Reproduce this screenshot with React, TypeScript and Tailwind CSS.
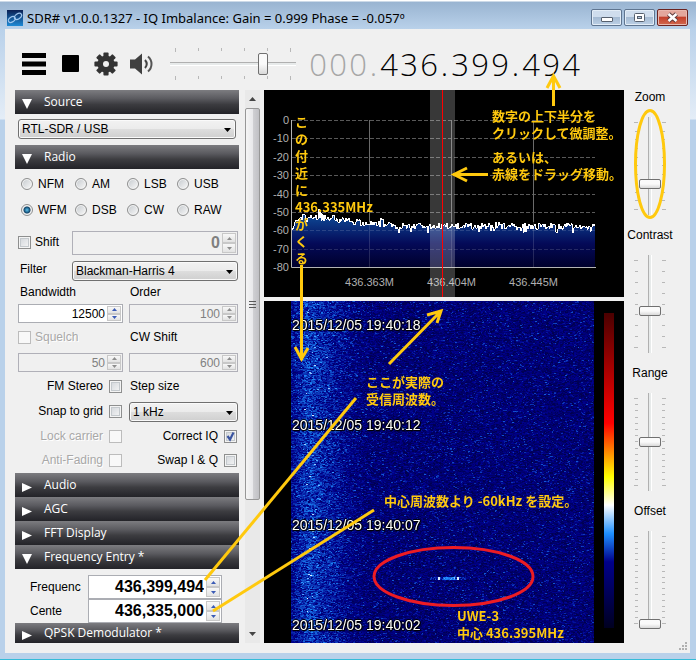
import React, { useEffect, useId, useMemo, useRef, useState } from 'react';

// small seeded generator so the noise is the same on every render
const createRandom = (seed: number) => () => {
    seed = (seed * 1664525 + 1013904223) >>> 0;
    return seed / 4294967296;
};

const PALETTE: [number, number[]][] = [
    [0, [0, 0, 40]],
    [0.35, [0, 0, 139]],
    [0.8, [30, 144, 255]],
    [1, [255, 255, 255]]
];

const levelToColor = (level: number) => {
    const v = Math.min(1, Math.max(0, level));
    const next = Math.max(1, PALETTE.findIndex(([stop]) => stop >= v));
    const [s0, c0] = PALETTE[next - 1];
    const [s1, c1] = PALETTE[next];
    return c0.map((c, i) => c + ((c1[i] - c) * (v - s0)) / (s1 - s0));
};

const WATERFALL_W = 303;
const WATERFALL_H = 342;

const TitleBar: React.FC = () => (
    <header className="h-[29px] flex items-center pl-[7px] pr-2 pt-[6px]">
        <svg width="16" height="16" viewBox="0 0 16 16" className="shrink-0">
            <defs>
                <linearGradient id="logo" x1="0" y1="0" x2="0" y2="1">
                    <stop offset="0" stopColor="#0b1f52" />
                    <stop offset="1" stopColor="#1d8ad6" />
                </linearGradient>
            </defs>
            <rect width="16" height="16" fill="url(#logo)" />
            <ellipse cx="4.8" cy="9.5" rx="3.8" ry="2.5" transform="rotate(-35 4.8 9.5)" fill="none" stroke="#9fc6ee" strokeWidth="1.2" />
            <ellipse cx="11" cy="6.4" rx="4" ry="2.5" transform="rotate(-35 11 6.4)" fill="none" stroke="#9fc6ee" strokeWidth="1.2" />
        </svg>
        <h1 className="flex-1 ml-1 font-['Noto_Sans'] text-[13px] leading-4 text-black whitespace-nowrap overflow-hidden">
            SDR# v1.0.0.1327 - IQ Imbalance: Gain = 0.999 Phase = -0.057º
        </h1>
        <div className="flex gap-0.5">
            <button aria-label="Minimize" className="w-[31px] h-[17px] rounded-[2px] border border-[#5f7590] bg-[linear-gradient(#cfdded_45%,#a5bbd3_50%,#bcd0e6)] shadow-[inset_0_0_0_1px_#e3edf7] flex justify-center items-end pb-[3px]">
                <span className="w-3 h-[5px] bg-white border border-[#56606e] rounded-[1px]"></span>
            </button>
            <button aria-label="Maximize" className="w-[31px] h-[17px] rounded-[2px] border border-[#5f7590] bg-[linear-gradient(#cfdded_45%,#a5bbd3_50%,#bcd0e6)] shadow-[inset_0_0_0_1px_#e3edf7] flex justify-center items-center">
                <svg width="11" height="9" viewBox="0 0 11 9">
                    <rect x="0.5" y="0.5" width="10" height="8" rx="1" fill="#fff" stroke="#56606e" />
                    <rect x="3.5" y="3.5" width="4" height="2" fill="#b5c8dd" stroke="#56606e" />
                </svg>
            </button>
            <button aria-label="Close" className="w-[31px] h-[17px] rounded-[2px] border border-[#6b2320] bg-[linear-gradient(#e3a79c_40%,#c4412c_50%,#d2694f)] shadow-[inset_0_0_0_1px_#e9b8ae] flex justify-center items-center">
                <svg width="13" height="11" viewBox="0 0 13 11">
                    <path d="M2.500 2l8 7M10.500 2l-8 7" stroke="#5c3a3c" strokeWidth="4.500" />
                    <path d="M2.500 2l8 7M10.500 2l-8 7" stroke="#fff" strokeWidth="2.600" />
                </svg>
            </button>
        </div>
    </header>
);

const Frequency: React.FC = () => (
    <div className="flex ml-3 font-['Open_Sans'] font-light text-[31px] leading-9" aria-label="Frequency">
        {'000.436.399.494'.split('').map((ch, i) => (
            <span key={i} className={`${ch === '.' ? 'w-[11px]' : 'w-5'} text-center ${i < 4 ? 'text-[#a6a6a6]' : 'text-black'}`}>{ch}</span>
        ))}
    </div>
);

const Toolbar: React.FC = () => {
    const [volume, setVolume] = useState(76);

    return (
        <div className="h-[61px] pt-2 pl-[11px] flex items-center">
            <button aria-label="Menu" className="w-9 flex justify-center">
                <svg width="24" height="22" viewBox="0 0 24 22">
                    <path d="M0 2.5h24M0 11h24M0 19.5h24" stroke="#000" strokeWidth="5" />
                </svg>
            </button>
            <button aria-label="Stop" className="w-9 flex justify-center">
                <span className="size-[17px] bg-black rounded-[1px]"></span>
            </button>
            <button aria-label="Settings" className="w-9 flex justify-center">
                <svg width="24" height="24" viewBox="-12 -12 24 24">
                    {[0, 45, 90, 135].map(angle => (
                        <rect key={angle} x="-2.6" y="-11.6" width="5.2" height="23.2" rx="1" fill="#333" transform={`rotate(${angle})`} />
                    ))}
                    <circle r="8.6" fill="#333" />
                    <circle r="3" fill="#f0f0f0" />
                </svg>
            </button>
            <button aria-label="Mute" className="w-9 flex justify-center">
                <svg width="24" height="22" viewBox="0 0 24 22" fill="none">
                    <path d="M0 6.500h5L12 0.500v21L5 15.500H0z" fill="#404040" />
                    <path d="M15 7q3.500 4 0 8" stroke="#444" strokeWidth="2" />
                    <path d="M18 3.500q3.500 3 3.500 7.500t-3.500 7.500" stroke="#555" strokeWidth="2" />
                </svg>
            </button>
            <div className="w-[126px] ml-[10px] flex flex-col">
                <div className="flex justify-between px-[5px]">
                    {[0, 1, 2, 3, 4, 5].map(i => <span key={i} className="w-px h-[3px] first:h-1 last:h-1 bg-[#b8b8b8]"></span>)}
                </div>
                <input
                    type="range"
                    aria-label="Volume"
                    value={volume}
                    onChange={(e) => setVolume(+e.target.value)}
                    className="appearance-none w-full h-6 bg-[linear-gradient(transparent_10px,#b0b0b0_10px,#b0b0b0_11px,#e7eaea_11px,#e7eaea_13px,#fff_13px,#fff_14px,transparent_14px)] [&::-webkit-slider-thumb]:appearance-none [&::-webkit-slider-thumb]:w-[10px] [&::-webkit-slider-thumb]:h-[22px] [&::-webkit-slider-thumb]:border [&::-webkit-slider-thumb]:border-[#707070] [&::-webkit-slider-thumb]:rounded-[2px] [&::-webkit-slider-thumb]:bg-[linear-gradient(#fafafa_50%,#d9d9d9)]"
                />
                <div className="flex justify-between px-[5px]">
                    {[0, 1, 2, 3, 4, 5].map(i => <span key={i} className="w-px h-[3px] first:h-1 last:h-1 bg-[#b8b8b8]"></span>)}
                </div>
            </div>
            <Frequency />
        </div>
    );
};

const PanelHeader: React.FC<{ title: string; open?: boolean; short?: boolean }> = ({ title, open, short }) => (
    <button className={`w-full ${short ? 'h-5' : 'h-6'} block bg-[linear-gradient(#7c7c80,#5b5b60_35%,#3c3c40_60%,#232328)] text-left overflow-hidden`}>
        <span className="flex h-5 items-center pl-[7px] font-['Open_Sans'] text-xs leading-4 text-white">
            <svg width="10" height="11" viewBox="0 0 10 11" className="mr-3 mt-[5px]">
                <path d={open ? 'M0 0h10L5 10z' : 'M0 1l10 4.500L0 10z'} fill="#fff" />
            </svg>
            {title}
        </span>
    </button>
);

const Combo: React.FC<{ id?: string; label?: string; options: string[] }> = ({ id, label, options }) => (
    <div className="relative w-full">
        <select id={id} aria-label={label} className="appearance-none w-full h-5 px-[3px] text-xs leading-4 text-black rounded-[3px] border border-[#707070] bg-[linear-gradient(#f2f2f2,#ebebeb_50%,#dddddd_52%,#cfcfcf)] shadow-[inset_0_0_0_1px_#fafafa]">
            {options.map(o => <option key={o}>{o}</option>)}
        </select>
        <svg width="7" height="4" viewBox="0 0 7 4" className="absolute right-[5px] top-[9px] pointer-events-none">
            <path d="M0 0h7L3.500 4z" fill="#000" />
        </svg>
    </div>
);

interface SpinBoxProps {
    id?: string;
    label?: string;
    value: string;
    disabled?: boolean;
    big?: boolean;
}

const SpinBox: React.FC<SpinBoxProps> = ({ id, label, value, disabled, big }) => {
    const [text, setText] = useState(value);
    const arrow = disabled ? '#8d8d8d' : '#3b5bb5';

    return (
        <div className={`w-full min-w-0 ${big ? 'h-6' : 'h-[19px]'} flex border ${disabled ? 'border-[#b0b0b8] bg-[#f0f0f0]' : 'border-[#abadb3] bg-white'}`}>
            <input
                id={id}
                aria-label={label}
                type="text"
                value={text}
                disabled={disabled}
                onChange={(e) => setText(e.target.value)}
                className={`w-0 min-w-0 flex-1 text-right bg-transparent outline-none pr-0.5 ${big ? 'text-base font-bold' : 'text-xs'} ${disabled ? 'text-[#808080]' : 'text-black'}`}
            />
            <div className="w-[14px] mr-px my-px flex flex-col">
                {['M0 3h5L2.500 0z', 'M0 0h5L2.500 3z'].map(d => (
                    <button key={d} disabled={disabled} aria-label="Step" className="flex-1 min-h-0 flex items-center justify-center border border-[#c8c8c8] bg-[linear-gradient(#f8f8f8,#e2e2e2)]">
                        <svg width="5" height="3" viewBox="0 0 5 3"><path d={d} fill={arrow} /></svg>
                    </button>
                ))}
            </div>
        </div>
    );
};

interface CheckProps {
    label: string;
    disabled?: boolean;
    defaultChecked?: boolean;
    boxFirst?: boolean;
}

const Check: React.FC<CheckProps> = ({ label, disabled, defaultChecked, boxFirst }) => (
    <label className={`flex items-center h-4 ${boxFirst ? 'flex-row-reverse justify-end gap-1' : 'justify-end gap-[6px] pr-px'} ${disabled ? 'text-[#a8a8a8] [text-shadow:1px_1px_0_#fff]' : 'text-black'}`}>
        {label}
        <span className="relative size-[13px]">
            <input
                type="checkbox"
                disabled={disabled}
                defaultChecked={defaultChecked}
                className="peer appearance-none block size-[13px] border border-[#8e8f8f] shadow-[inset_0_0_0_1px_#f4f4f4,inset_0_0_0_2px_#c4c9cd] bg-[linear-gradient(135deg,#cfd3d8,#f8f8f8)] disabled:border-[#bcbcbc] disabled:shadow-none disabled:bg-none disabled:bg-[#f8f8f8]"
            />
            <svg viewBox="0 0 13 13" className="absolute inset-0 size-[13px] hidden peer-checked:block pointer-events-none" fill="none">
                <path d="M3.500 6l2.500 3.500L9.500 2.500" stroke="#3a54a0" strokeWidth="2.200" />
            </svg>
        </span>
    </label>
);

const MODES = ['NFM', 'AM', 'LSB', 'USB', 'WFM', 'DSB', 'CW', 'RAW'];

const Sidebar: React.FC = () => {
    const [mode, setMode] = useState('WFM');
    const id = useId();

    return (
        <aside className="w-56 shrink-0 text-xs leading-4 text-black">
            <PanelHeader title="Source" open />
            <div className="pt-[5px] pb-[6px] px-[3px]">
                <Combo label="Source" options={['RTL-SDR / USB']} />
            </div>

            <PanelHeader title="Radio" open />
            <div className="pt-0.5 pb-[5px] pl-[3px] pr-px">
                <div className="grid grid-cols-[54px_52px_50px_1fr] pl-[3px]">
                    {MODES.map(m => (
                        <label key={m} className="h-[26px] flex items-center gap-[5px]">
                            <input
                                type="radio"
                                name="mode"
                                checked={mode === m}
                                onChange={() => setMode(m)}
                                className="appearance-none size-3 rounded-full border border-[#8e8f8f] shadow-[inset_0_0_0_1px_#f4f4f4] bg-[linear-gradient(135deg,#c4c9cd,#fafafa)] checked:bg-[radial-gradient(circle,#5cc4f0_0,#12486e_3px,#0d3352_3px,#e4e8ea_4px)]"
                            />
                            {m}
                        </label>
                    ))}
                </div>

                <div className="grid grid-cols-[54px_1fr] mt-2">
                    <div className="pt-[3px]"><Check label="Shift" boxFirst /></div>
                    <SpinBox label="Shift frequency" value="0" disabled big />
                </div>

                <div className="grid grid-cols-[54px_1fr] mt-[6px]">
                    <label htmlFor={`${id}-filter`} className="pl-0.5">Filter</label>
                    <Combo id={`${id}-filter`} options={['Blackman-Harris 4', 'Blackman-Harris 7', 'Hamming']} />
                </div>

                <div className="grid grid-cols-[105px_109px] gap-x-[6px] mt-[3px]">
                    <label htmlFor={`${id}-bw`} className="pl-0.5">Bandwidth</label>
                    <label htmlFor={`${id}-order`} className="pl-px">Order</label>
                    <div className="mt-1"><SpinBox id={`${id}-bw`} value="12500" /></div>
                    <div className="mt-1"><SpinBox id={`${id}-order`} value="100" disabled /></div>

                    <div className="mt-[6px]"><Check label="Squelch" boxFirst disabled /></div>
                    <label htmlFor={`${id}-cw`} className="mt-[6px] pl-px">CW Shift</label>
                    <div className="mt-2"><SpinBox label="Squelch level" value="50" disabled /></div>
                    <div className="mt-2"><SpinBox id={`${id}-cw`} value="600" disabled /></div>

                    <div className="mt-[6px]"><Check label="FM Stereo" /></div>
                    <label htmlFor={`${id}-step`} className="mt-[6px] pl-px">Step size</label>
                    <div className="mt-[9px]"><Check label="Snap to grid" /></div>
                    <div className="mt-2"><Combo id={`${id}-step`} options={['1 kHz', '5 kHz', '10 kHz']} /></div>

                    <div className="mt-[6px]"><Check label="Lock carrier" disabled /></div>
                    <div className="mt-[6px]"><Check label="Correct IQ" defaultChecked /></div>
                    <div className="mt-2"><Check label="Anti-Fading" disabled /></div>
                    <div className="mt-2"><Check label="Swap I & Q" /></div>
                </div>
            </div>

            <PanelHeader title="Audio" />
            <PanelHeader title="AGC" />
            <PanelHeader title="FFT Display" />
            <PanelHeader title="Frequency Entry *" open />
            <div className="grid grid-cols-[58px_134px] items-center pt-[6px] pl-[15px]">
                <label htmlFor={`${id}-freq`}>Frequenc</label>
                <SpinBox id={`${id}-freq`} value="436,399,494" big />
                <label htmlFor={`${id}-center`}>Cente</label>
                <SpinBox id={`${id}-center`} value="436,335,000" big />
            </div>
            <PanelHeader title="QPSK Demodulator *" short />
        </aside>
    );
};

const ScrollBar: React.FC = () => (
    <div className="w-[15px] shrink-0 ml-[6px] mr-1 bg-[#e9e9e9] flex flex-col items-center">
        <svg width="7" height="4" viewBox="0 0 7 4" className="my-[7px]"><path d="M0 4h7L3.500 0z" fill="#444" /></svg>
        <div className="w-full h-[392px] rounded-[2px] border border-[#979797] bg-[linear-gradient(90deg,#f5f5f5,#e9e9eb_50%,#d0d0d3_55%,#c0c0c4)] flex flex-col gap-0.5 items-center justify-center">
            {[0, 1, 2].map(i => <span key={i} className="w-[7px] h-px bg-[#5a5a5a]"></span>)}
        </div>
        <svg width="7" height="4" viewBox="0 0 7 4" className="mt-auto mb-[7px]"><path d="M0 0h7L3.500 4z" fill="#444" /></svg>
    </div>
);

const Spectrum: React.FC = () => {
    const trace = useMemo(() => {
        const rand = createRandom(77);
        const points: string[] = [];
        for (let x = 0; x <= 303; x++) {
            // raised shoulder on the left, falling to the noise floor
            let y = 136 - 9 * Math.exp(-(((x - 25) / 45) ** 2)) + (rand() - 0.5) * 7;
            if (rand() > 0.95) y += 4;
            if (x < 4) y += 12 - x * 3;
            if (x > 26 && x < 30) y -= 5;
            if (x > 88 && x < 92) y -= 5;
            points.push(`${x + 28},${y.toFixed(1)}`);
        }
        return points.join(' ');
    }, []);

    return (
        <svg viewBox="0 0 360 207" className="block w-full h-auto bg-black font-['Liberation_Sans'] text-[11px]">
            <defs>
                <linearGradient id="fill" gradientUnits="userSpaceOnUse" x1="0" y1="118" x2="0" y2="177">
                    <stop offset="0" stopColor="#1159a5" />
                    <stop offset="0.6" stopColor="#040a58" />
                    <stop offset="1" stopColor="#00002c" />
                </linearGradient>
            </defs>
            <polygon points={`28,177 ${trace} 331,177`} fill="url(#fill)" />
            {[0, 1, 2, 3, 4, 5, 6, 7, 8].map(i => {
                const y = Math.round(30 + i * 18.4);
                return (
                    <g key={i}>
                        {i < 8 && <path d={`M28 ${y + 0.5}H331`} stroke="#fff" strokeOpacity={i > 5 ? 0.14 : 0.35} strokeDasharray="4 2" />}
                        <text x="25" y={y + 4} textAnchor="end" fill="#b0b0b0">{i ? -10 * i : 0}</text>
                    </g>
                );
            })}
            {[105.5, 187.5, 269.5].map((x, i) => (
                <g key={x}>
                    <path d={`M${x} 30V132`} stroke="#6a6a6a" />
                    <path d={`M${x} 132V177`} stroke="#fff" strokeOpacity="0.14" />
                    <text x={x} y="196" textAnchor="middle" fill="#b0b0b0">{['436.363M', '436.404M', '436.445M'][i]}</text>
                </g>
            ))}
            <polyline points={trace} fill="none" stroke="#fff" shapeRendering="crispEdges" />
            <path d="M27.500 30V177.500H332" fill="none" stroke="#b4b4b4" />
            <rect x="166" width="25" height="207" fill="#fff" fillOpacity="0.22" />
            <path d="M178.500 0V207" stroke="#ff0000" />
        </svg>
    );
};

const TIMES = ['2015/12/05 19:40:18', '2015/12/05 19:40:12', '2015/12/05 19:40:07', '2015/12/05 19:40:02'];

const Waterfall: React.FC = () => {
    const canvasRef = useRef<HTMLCanvasElement>(null);

    useEffect(() => {
        const ctx = canvasRef.current?.getContext('2d');
        if (!ctx) return;
        const rand = createRandom(1327);
        const image = ctx.createImageData(WATERFALL_W, WATERFALL_H);

        for (let y = 0; y < WATERFALL_H; y++) {
            let level = 0;
            let run = 0;
            for (let x = 0; x < WATERFALL_W; x++) {
                if (run <= 0) {
                    const band = 0.1 * Math.exp(-(((x - 16) / 10) ** 2)) + 0.2 * Math.exp(-(((x - 26) / 32) ** 2));
                    const spike = rand() ** 9 * 0.3;
                    level = 0.13 + rand() * 0.23 + spike + band * (0.3 + rand() * 1.2);
                    run = 1 + Math.floor(rand() * 2);
                }
                run--;
                let v = level;
                // the satellite's short burst
                if (y >= 276 && y <= 278) {
                    if (x > 138 && x < 175) v = 0.25 + rand() * 0.4;
                    if (x > 151 && x < 164) v = 0.65 + rand() * 0.25;
                    if ((x > 146 && x < 149) || (x > 165 && x < 168)) v = 0.97;
                }
                const [r, g, b] = levelToColor(v);
                const p = (y * WATERFALL_W + x) * 4;
                image.data[p] = r;
                image.data[p + 1] = g;
                image.data[p + 2] = b;
                image.data[p + 3] = 255;
            }
        }
        ctx.putImageData(image, 0, 0);
    }, []);

    return (
        <div className="flex-1 flex bg-black pl-[27px]">
            <div className="relative flex-1">
                <canvas ref={canvasRef} width={WATERFALL_W} height={WATERFALL_H} className="absolute inset-0 size-full [image-rendering:pixelated]"></canvas>
                <div className="relative pt-4 pl-px flex flex-col gap-[84px] text-sm leading-4 text-white [text-shadow:1px_0_1px_#000,-1px_0_1px_#000,0_1px_1px_#000,0_-1px_1px_#000,1px_1px_1px_#000]">
                    {TIMES.map(t => <time key={t}>{t}</time>)}
                </div>
            </div>
            <div className="w-[30px] flex justify-center pt-3 pb-[15px]">
                <div className="w-[10px] bg-[linear-gradient(#4b0000,#ff0000_35%,#ffff00_52%,#ffffff_61%,#1e90ff_70%,#00008b_79%,#000020)]"></div>
            </div>
        </div>
    );
};

const Ticks: React.FC<{ count: number; right?: boolean }> = ({ count, right }) => (
    <div className={`w-1 flex flex-col justify-between py-[5px] ${right ? 'items-start' : 'items-end'}`}>
        {Array.from({ length: count }, (_, i) => <span key={i} className="h-px w-[3px] first:w-1 last:w-1 bg-[#b8b8b8]"></span>)}
    </div>
);

const VerticalSlider: React.FC<{ label: string; initial: number; ticks: number }> = ({ label, initial, ticks }) => {
    const [value, setValue] = useState(initial);

    return (
        <label className="h-[138px] flex flex-col items-center gap-[13px] text-xs leading-[14px] text-black">
            {label}
            <span className="flex h-[98px] gap-px">
                <Ticks count={ticks} />
                <input
                    type="range"
                    value={value}
                    onChange={(e) => setValue(+e.target.value)}
                    className="appearance-none [writing-mode:vertical-lr] [direction:rtl] w-[22px] h-full bg-[linear-gradient(90deg,transparent_9px,#b0b0b0_9px,#b0b0b0_10px,#e7eaea_10px,#e7eaea_12px,#fff_12px,#fff_13px,transparent_13px)] [&::-webkit-slider-thumb]:appearance-none [&::-webkit-slider-thumb]:w-[22px] [&::-webkit-slider-thumb]:h-[10px] [&::-webkit-slider-thumb]:border [&::-webkit-slider-thumb]:border-[#707070] [&::-webkit-slider-thumb]:rounded-[2px] [&::-webkit-slider-thumb]:bg-[linear-gradient(#fafafa_50%,#d9d9d9)]"
                />
                <Ticks count={ticks} right />
            </span>
        </label>
    );
};

// hand-drawn notes that lie over the window
const Annotations: React.FC = () => (
    <div className="absolute inset-0 overflow-hidden pointer-events-none font-['Noto_Sans_CJK_JP',sans-serif] font-bold text-[13px] leading-[17px] text-[#ffc90e] whitespace-pre">
        <svg width="696" height="660" viewBox="0 0 696 660" fill="none" stroke="#ffc90e" strokeWidth="3" className="absolute left-0 top-0">
            <path d="M301.500 265V360M295 347l6.500 12L308 348" />
            <path d="M389 364L440 312M427 315l14-4-4 12" />
            <path d="M356 398L205 580" />
            <path d="M374 510L213 611" />
            <path d="M553.500 106V77M547 88l6.500-12 6.500 12" />
            <path d="M488 174.500H453M467 168l-13 6.500L467 181" />
            <ellipse cx="650" cy="164" rx="14.500" ry="53.500" />
            <ellipse cx="453.500" cy="576.500" rx="79.500" ry="29" stroke="#ed1c24" />
        </svg>
        <p className="absolute left-[295px] top-[113px]">{'こ\nの\n付\n近\nに\n436.335MHz\nが\nく\nる'}</p>
        <p className="absolute left-[492px] top-[107px]">{'数字の上下半分を\nクリックして微調整。'}</p>
        <p className="absolute left-[492px] top-[148px]">{'あるいは、\n赤線をドラッグ移動。'}</p>
        <p className="absolute left-[366px] top-[373px]">{'ここが実際の\n受信周波数。'}</p>
        <p className="absolute left-[384px] top-[492px]">中心周波数より -60kHz を設定。</p>
        <p className="absolute left-[457px] top-[607px]">{'UWE-3\n中心 436.395MHz'}</p>
    </div>
);

export default function App() {
    return (
        <div className="relative min-h-screen flex flex-col border-b border-[#35bcd8] bg-[linear-gradient(#fff_1px,#99b4d1_2px,#b9d1ea_29px,#e4edf7_119px,#b9d1ea_120px)] font-['Liberation_Sans',sans-serif]">
            <TitleBar />
            <main className="relative flex-1 flex flex-col ml-[5px] mr-[6px] mb-[6px] pb-[10px] bg-[#f0f0f0]">
                <Toolbar />
                <div className="flex-1 flex pl-[10px] pr-[14px]">
                    <Sidebar />
                    <ScrollBar />
                    <section className="flex-1 min-w-0 flex flex-col gap-1">
                        <Spectrum />
                        <Waterfall />
                    </section>
                    <div className="w-[52px] shrink-0">
                        <VerticalSlider label="Zoom" initial={30} ticks={11} />
                        <VerticalSlider label="Contrast" initial={42} ticks={9} />
                        <VerticalSlider label="Range" initial={50} ticks={15} />
                        <VerticalSlider label="Offset" initial={0} ticks={16} />
                    </div>
                </div>
                <svg width="9" height="9" viewBox="0 0 9 9" fill="#b0b0b0" className="absolute right-0.5 bottom-0.5">
                    <path d="M6 0h2v2H6zM6 3h2v2H6zM3 3h2v2H3zM6 6h2v2H6zM3 6h2v2H3zM0 6h2v2H0z" />
                </svg>
            </main>
            <Annotations />
        </div>
    );
}
